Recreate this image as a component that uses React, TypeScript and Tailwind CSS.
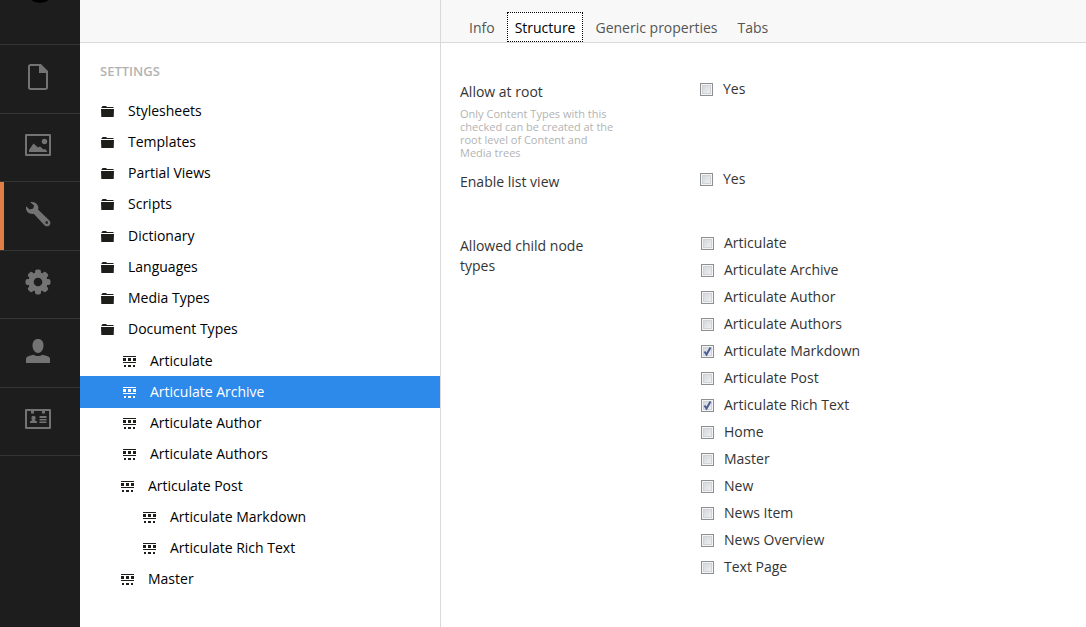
import type { ReactNode } from "react";
import clsx from "clsx";

const sections = [
  { name: "Content", icon: <DocumentIcon /> },
  { name: "Media", icon: <PictureIcon /> },
  { name: "Settings", icon: <WrenchIcon />, active: true },
  { name: "Developer", icon: <GearIcon /> },
  { name: "Users", icon: <UserIcon /> },
  { name: "Members", icon: <IdCardIcon /> },
];

const tree = [
  { name: "Stylesheets", pad: "pl-5" },
  { name: "Templates", pad: "pl-5" },
  { name: "Partial Views", pad: "pl-5" },
  { name: "Scripts", pad: "pl-5" },
  { name: "Dictionary", pad: "pl-5" },
  { name: "Languages", pad: "pl-5" },
  { name: "Media Types", pad: "pl-5" },
  { name: "Document Types", pad: "pl-5" },
  { name: "Articulate", pad: "pl-[42px]", doc: true },
  { name: "Articulate Archive", pad: "pl-[42px]", doc: true, active: true },
  { name: "Articulate Author", pad: "pl-[42px]", doc: true },
  { name: "Articulate Authors", pad: "pl-[42px]", doc: true },
  { name: "Articulate Post", pad: "pl-10", doc: true },
  { name: "Articulate Markdown", pad: "pl-[62px]", doc: true },
  { name: "Articulate Rich Text", pad: "pl-[62px]", doc: true },
  { name: "Master", pad: "pl-10", doc: true },
];

const tabs = ["Info", "Structure", "Generic properties", "Tabs"];

const childTypes = [
  { name: "Articulate" },
  { name: "Articulate Archive" },
  { name: "Articulate Author" },
  { name: "Articulate Authors" },
  { name: "Articulate Markdown", checked: true },
  { name: "Articulate Post" },
  { name: "Articulate Rich Text", checked: true },
  { name: "Home" },
  { name: "Master" },
  { name: "New" },
  { name: "News Item" },
  { name: "News Overview" },
  { name: "Text Page" },
];

function DocumentIcon() {
  return (
    <svg width="26" height="26" viewBox="0 0 26 26" fill="none" stroke="currentColor" strokeWidth="2">
      <path d="M5 1H15.5L22 7.5V23.5a1.5 1.5 0 0 1-1.5 1.5H5.5A1.5 1.5 0 0 1 4 23.5V2.5A1.5 1.5 0 0 1 5.5 1" />
      <path d="M14 1V9H22.5L15 1Z" fill="currentColor" stroke="none" />
    </svg>
  );
}

function PictureIcon() {
  return (
    <svg width="26" height="26" viewBox="0 0 26 26" fill="currentColor">
      <path fillRule="evenodd" d="M1 2H25a1 1 0 0 1 1 1V23a1 1 0 0 1-1 1H1a1 1 0 0 1-1-1V3a1 1 0 0 1 1-1ZM2 4V22H24V4Z" />
      <circle cx="19.5" cy="9.5" r="2.7" />
      <path d="M4 20v-2l4.5-6.5 4.5 4 2-1 3.5 3 1.5-.5 2 2v1Z" />
    </svg>
  );
}

function WrenchIcon() {
  return (
    <svg width="26" height="26" viewBox="0 0 26 26" fill="currentColor">
      <path
        fillRule="evenodd"
        d="M5.2 1.2C8.5.4 11.8 1.800 13 5c.5 1.4.4 2.500 0 3.600l11.200 10.600c1.600 1.500 1.500 3.900.2 5.200-1.400 1.300-3.900 1.200-5.200-.3L8.700 12.700c-1.200.4-2.500.3-3.700-.2C2 11.400.5 8.500 1.100 5.200L4.600 8.600l3.600-1L9.100 4.500ZM21.700 20.300a1.300 1.300 0 1 0 .01 2.600 1.300 1.300 0 0 0-.01-2.600Z"
      />
    </svg>
  );
}

function GearIcon() {
  return (
    <svg width="26" height="26" viewBox="0 0 26 26">
      <g fill="currentColor">
        {[0, 45, 90, 135].map((angle) => (
          <rect key={angle} x="10" y="0.5" width="6" height="25" rx="2" transform={`rotate(${angle} 13 13)`} />
        ))}
        <circle cx="13" cy="13" r="9.7" />
      </g>
      <circle cx="13" cy="13" r="4.3" fill="#1d1d1d" />
    </svg>
  );
}

function UserIcon() {
  return (
    <svg width="26" height="26" viewBox="0 0 26 26" fill="currentColor">
      <path d="M13 1c3.500 0 5.500 2.500 5.500 6.500S16 15 13 15s-5.500-3.500-5.500-7.500S9.500 1 13 1Z" />
      <path d="M1 25v-4c0-1.500 1-2.500 3-3l4.500-1.200c2.500 1.600 6.500 1.600 9 0L22 18c2 .5 3 1.500 3 3v4Z" />
    </svg>
  );
}

function IdCardIcon() {
  return (
    <svg width="26" height="26" viewBox="0 0 26 26" fill="currentColor">
      <path fillRule="evenodd" d="M1 3H25a1 1 0 0 1 1 1V22a1 1 0 0 1-1 1H1a1 1 0 0 1-1-1V4a1 1 0 0 1 1-1ZM2 5V21H24V5H20V7.500H17V5H9V7.500H6V5Z" />
      <circle cx="8.5" cy="12" r="2.2" />
      <path d="M5 17v-1.500l2.500-1.500h2l2.500 1.500V17ZM14.500 10h7V12h-7ZM14.500 13h7v1.500h-7ZM14.500 15.500h7v1.500h-7Z" />
    </svg>
  );
}

function FolderIcon() {
  return (
    <svg width="13" height="13" viewBox="0 0 13 13" fill="currentColor">
      <path d="M1 2 1.500 1H5L6 2H12.500V3H.5V2ZM0 4H13L12.700 12H.3Z" />
    </svg>
  );
}

function DocTypeIcon() {
  return (
    <svg width="13" height="13" viewBox="0 0 13 13" fill="currentColor">
      <path d="M0 1H13V2H0ZM0 7H13V8H0ZM0 3H3V6H0ZM5 3H8V6H5ZM10 3H13V6H10ZM1 10H3V12H1ZM5 10H8V12H5ZM10 10H12V12H10Z" />
    </svg>
  );
}

function Checkbox({ label, checked }: { label: string; checked?: boolean }) {
  return (
    <label className="flex items-center gap-[10px] leading-5">
      <span className="relative mt-px size-[13px] shrink-0">
        <input
          type="checkbox"
          defaultChecked={checked}
          className="peer block size-[13px] appearance-none border border-[#8e8f8f] bg-linear-to-br from-[#cdd0d6] to-[#f6f6f6] shadow-[inset_0_0_0_1px_#f4f4f4,inset_0_0_0_2px_#d0d3d8]"
        />
        <svg
          viewBox="0 0 13 13"
          className="pointer-events-none absolute inset-0 hidden peer-checked:block"
          fill="none"
          stroke="#4a5f97"
          strokeWidth="2"
        >
          <path d="M3.5 6.5 5.5 9.5 9.5 2.5" />
        </svg>
      </span>
      {label}
    </label>
  );
}

function Property({ title, help, children }: { title: string; help?: string; children: ReactNode }) {
  return (
    <div className="flex">
      <div className="w-60 shrink-0 pt-[3px]">
        <h2 className="w-40 leading-5">{title}</h2>
        {help && <p className="mt-[5px] w-40 text-[11px] leading-[13px] text-[#b3b3b3]">{help}</p>}
      </div>
      <div className="min-w-0 flex-1">{children}</div>
    </div>
  );
}

function App() {
  return (
    <div className="flex min-h-screen bg-white font-['Open_Sans',sans-serif] text-sm text-[#343434]">
      <nav aria-label="Sections" className="w-20 shrink-0 bg-[#1d1d1d] text-[#737373]">
        <div className="flex h-[45px] justify-center overflow-hidden border-b border-[#343434]">
          <div className="-mt-[27px] size-[30px] rounded-full bg-black" />
        </div>
        <ul className="grid min-h-[411px] auto-rows-fr">
          {sections.map((section) => (
            <li key={section.name} className="border-b border-[#343434]">
              <a
                href="#"
                aria-label={section.name}
                className={clsx(
                  "flex h-full items-center justify-center border-l-4 pr-2 pb-1",
                  section.active ? "border-[#e07f45]" : "border-transparent"
                )}
              >
                {section.icon}
              </a>
            </li>
          ))}
        </ul>
      </nav>

      <aside className="w-[361px] shrink-0 border-r border-[#d9d9d9]">
        <div className="h-[43px] border-b border-[#d9d9d9] bg-[#f8f8f8]" />
        <h5 className="mt-[18px] pl-5 text-[13px] leading-5 font-semibold text-[#b3b3b3]">SETTINGS</h5>
        <ul className="mt-[14px] grid min-h-[500px] auto-rows-fr text-black">
          {tree.map((node) => (
            <li key={node.name}>
              <a
                href="#"
                className={clsx(
                  "flex h-full items-center gap-[14px]",
                  node.pad,
                  node.active && "bg-[#2e8aea] text-white"
                )}
              >
                <span className={clsx("mt-px ml-px", !node.active && "text-[#1d1d1a]")}>
                  {node.doc ? <DocTypeIcon /> : <FolderIcon />}
                </span>
                {node.name}
              </a>
            </li>
          ))}
        </ul>
      </aside>

      <main className="min-w-0 flex-1">
        <header className="flex h-[43px] items-end gap-1 border-b border-[#d9d9d9] bg-[#f8f8f8] pl-5">
          {tabs.map((tab) => (
            <button
              key={tab}
              type="button"
              className={clsx(
                "border px-[7px] pt-[5px] pb-[3px] leading-5",
                tab === "Structure"
                  ? "border-dotted border-black bg-white text-black"
                  : "border-transparent text-[#555]"
              )}
            >
              {tab}
            </button>
          ))}
        </header>
        <form className="flex flex-col pt-9 pl-[19px]">
          <Property
            title="Allow at root"
            help="Only Content Types with this checked can be created at the root level of Content and Media trees"
          >
            <Checkbox label="Yes" />
          </Property>
          <div className="mt-[10px]">
            <Property title="Enable list view">
              <Checkbox label="Yes" />
            </Property>
          </div>
          <div className="mt-[41px]">
            <Property title="Allowed child node types">
              <div className="flex flex-col gap-[7px] pl-px">
                {childTypes.map((type) => (
                  <Checkbox key={type.name} label={type.name} checked={type.checked} />
                ))}
              </div>
            </Property>
          </div>
        </form>
      </main>
    </div>
  );
}

export default App;
